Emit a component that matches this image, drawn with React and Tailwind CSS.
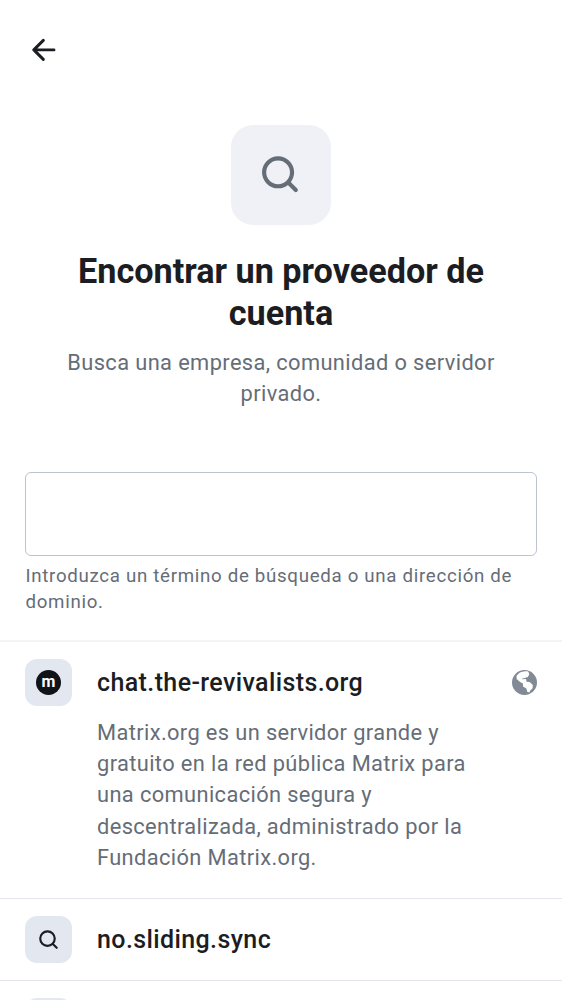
function BackArrow() {
  return (
    <svg viewBox="0 0 24 24" className="h-6 w-6" fill="none" stroke="#1b1d22" strokeWidth="2.9" strokeLinecap="round" strokeLinejoin="round" aria-hidden="true">
      <path d="M11.3 2.4 1.8 11.9 11.3 21.4M1.8 11.9H22" />
    </svg>
  );
}

function SearchIcon({ className }) {
  return (
    <svg viewBox="0 0 24 24" className={className} fill="none" stroke="currentColor" strokeWidth="2" strokeLinecap="round" aria-hidden="true">
      <circle cx="10.6" cy="10.7" r="6.7" />
      <path d="m15.5 15.6 3.6 3.6" />
    </svg>
  );
}

function PublicIcon() {
  return (
    <svg viewBox="0 0 25 25" className="h-[25px] w-[25px]" aria-hidden="true">
      <circle cx="12.5" cy="12.5" r="12.5" fill="#818a95" />
      <path fill="#fff" d="M7.2 3C9.6 1.4 13 .7 16.3 1.5L17.3 4.6 15.8 6.9 12.7 8.1 10.5 8.4 9.9 9.3 14 9.1 14.6 11.7 17.7 11.9 20.8 15 20.6 18.2 18.5 20.3 17.3 22.6 15.2 21.8 14.4 18.6 11 16.4 10.9 13.4 8.5 12.2 4.6 8.9 4.6 5.8Z" />
    </svg>
  );
}

function Tile({ children }) {
  return <div className="flex h-[47px] w-[47px] shrink-0 items-center justify-center rounded-[12px] bg-[#e3e7f0] text-[#1b1d22]">{children}</div>;
}

function Provider({ icon, name, isPublic, className }) {
  return (
    <div className={className}>
      <div className="flex h-[47px] items-center">
        <Tile>{icon}</Tile>
        <h2 className="ml-[25px] flex-1 text-[25px] font-medium tracking-[0.39px] text-[#1b1d22]">{name}</h2>
        {isPublic && <PublicIcon />}
      </div>
    </div>
  );
}

export default function App() {
  return (
    <main className="h-[1000px] w-[562px] overflow-hidden bg-white font-['Roboto',sans-serif]">
      <header className="flex h-[100px] items-center px-[31.5px]">
        <button aria-label="Atrás"><BackArrow /></button>
      </header>
      <div className="flex flex-col items-center pt-[25px] text-center">
        <div className="flex h-[100px] w-[100px] items-center justify-center rounded-[22px] bg-[#f0f1f6] text-[#656d77]">
          <SearchIcon className="h-[50px] w-[50px]" />
        </div>
        <h1 className="mt-[25px] text-[34.2px] leading-[42px] font-bold whitespace-nowrap text-[#1b1d22]">
          Encontrar un proveedor de<br />cuenta
        </h1>
        <p className="mt-[13px] text-[21.84px] leading-[31.2px] tracking-[0.39px] whitespace-nowrap text-[#656d77]">
          Busca una empresa, comunidad o servidor<br />privado.
        </p>
      </div>
      <div className="mt-[63px] px-[25px]">
        <input aria-label="Proveedor" className="block h-[84px] w-full rounded-[6px] border-[1.5px] border-[#bdc3cf] px-6 text-[25px] outline-none" />
        <p className="mt-[7px] pl-[0.5px] text-[18.7px] leading-[26px] tracking-[0.69px] whitespace-nowrap text-[#656d77]">
          Introduzca un término de búsqueda o una dirección de<br />dominio.
        </p>
      </div>
      <section className="mt-[25px] border-t-2 border-[#f3f4f6] px-[25px] pt-[17px] pb-[25.4px]">
        <Provider
          name="chat.the-revivalists.org"
          isPublic
          icon={<span className="flex h-[25px] w-[25px] items-center justify-center rounded-full bg-[#101317] pb-[2px] text-[16px] leading-none font-bold text-white">m</span>}
        />
        <p className="mt-[10.6px] ml-[72px] text-[21.84px] leading-[31.2px] tracking-[0.38px] whitespace-nowrap text-[#656d77]">
          Matrix.org es un servidor grande y<br />gratuito en la red pública Matrix para<br />una comunicación segura y<br />descentralizada, administrado por la<br />Fundación Matrix.org.
        </p>
      </section>
      <Provider className="border-t border-[#e3e5ec] px-[25px] py-[17px]" name="no.sliding.sync" icon={<SearchIcon className="h-[26px] w-[26px]" />} />
      <Provider className="border-t border-[#e3e5ec] px-[25px] py-[17px]" name="" icon={<SearchIcon className="h-[26px] w-[26px]" />} />
    </main>
  );
}
